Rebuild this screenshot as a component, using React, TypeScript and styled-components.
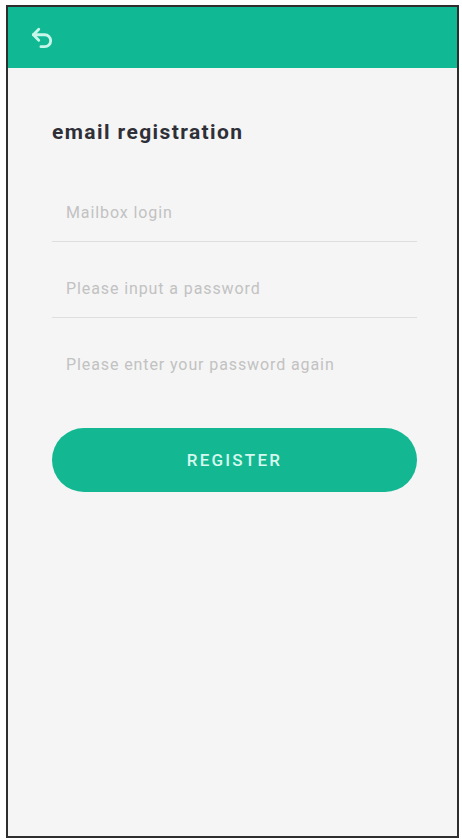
import React from "react";
import styled, { createGlobalStyle } from "styled-components";

const Global = createGlobalStyle`
  html, body { margin: 0; padding: 0; background: #ffffff; }
  body { font-family: "Roboto", "Liberation Sans", Arial, sans-serif; }
  * { box-sizing: border-box; }
`;

const Frame = styled.div`
  margin: 5px 0 0 6px;
  width: 453px;
  height: 833px;
  border: 2px solid #2e2e2e;
  background: #f5f5f5;
  display: flex;
  flex-direction: column;
  overflow: hidden;
`;

const Header = styled.header`
  height: 61px;
  background: #10b994;
  display: flex;
  align-items: center;
  padding-left: 20px;
  flex-shrink: 0;
`;

const BackButton = styled.button`
  border: none;
  background: transparent;
  padding: 0;
  width: 28px;
  height: 28px;
  display: flex;
  align-items: center;
  justify-content: center;
  color: #c9f6ea;
  cursor: pointer;
`;

const Content = styled.main`
  padding: 51px 40px 0 44px;
  display: flex;
  flex-direction: column;
`;

const Title = styled.h1`
  margin: 0;
  font-size: 21px;
  font-weight: 700;
  letter-spacing: 1.4px;
  color: #2f2f38;
  line-height: 26px;
`;

const Form = styled.form`
  margin-top: 21px;
  display: flex;
  flex-direction: column;
`;

const Field = styled.div<{ $line: boolean }>`
  height: 76px;
  display: flex;
  align-items: flex-end;
  padding: 0 0 18px 14px;
  border-bottom: 1px solid ${(p) => (p.$line ? "#dedede" : "transparent")};
`;

const Input = styled.input`
  border: none;
  outline: none;
  background: transparent;
  width: 100%;
  padding: 0;
  font-family: "Roboto", "Liberation Sans", Arial, sans-serif;
  font-size: 16px;
  letter-spacing: 0.9px;
  line-height: 20px;
  color: #333;
  &::placeholder { color: #c2c2c2; }
`;

const Submit = styled.button`
  margin-top: 34px;
  height: 64px;
  border: none;
  border-radius: 32px;
  background: #13b893;
  color: #d6f8ee;
  font-family: "Roboto", "Liberation Sans", Arial, sans-serif;
  font-size: 17px;
  font-weight: 500;
  letter-spacing: 2.2px;
  cursor: pointer;
`;

const UndoIcon = () => (
  <svg width="26" height="26" viewBox="0 0 24 24" fill="none" stroke="currentColor" strokeWidth="2.6" strokeLinecap="round" strokeLinejoin="round">
    <path d="M9 14 4 9l5-5" />
    <path d="M4 9h10.5a5.5 5.5 0 0 1 5.5 5.5a5.5 5.5 0 0 1-5.5 5.5H11" />
  </svg>
);

export default function App() {
  return (
    <>
      <Global />
      <Frame>
        <Header>
          <BackButton aria-label="back">
            <UndoIcon />
          </BackButton>
        </Header>
        <Content>
          <Title>email registration</Title>
          <Form onSubmit={(e) => e.preventDefault()}>
            <Field $line>
              <Input type="email" placeholder="Mailbox login" />
            </Field>
            <Field $line>
              <Input type="password" placeholder="Please input a password" />
            </Field>
            <Field $line={false}>
              <Input type="password" placeholder="Please enter your password again" />
            </Field>
            <Submit type="submit">REGISTER</Submit>
          </Form>
        </Content>
      </Frame>
    </>
  );
}
